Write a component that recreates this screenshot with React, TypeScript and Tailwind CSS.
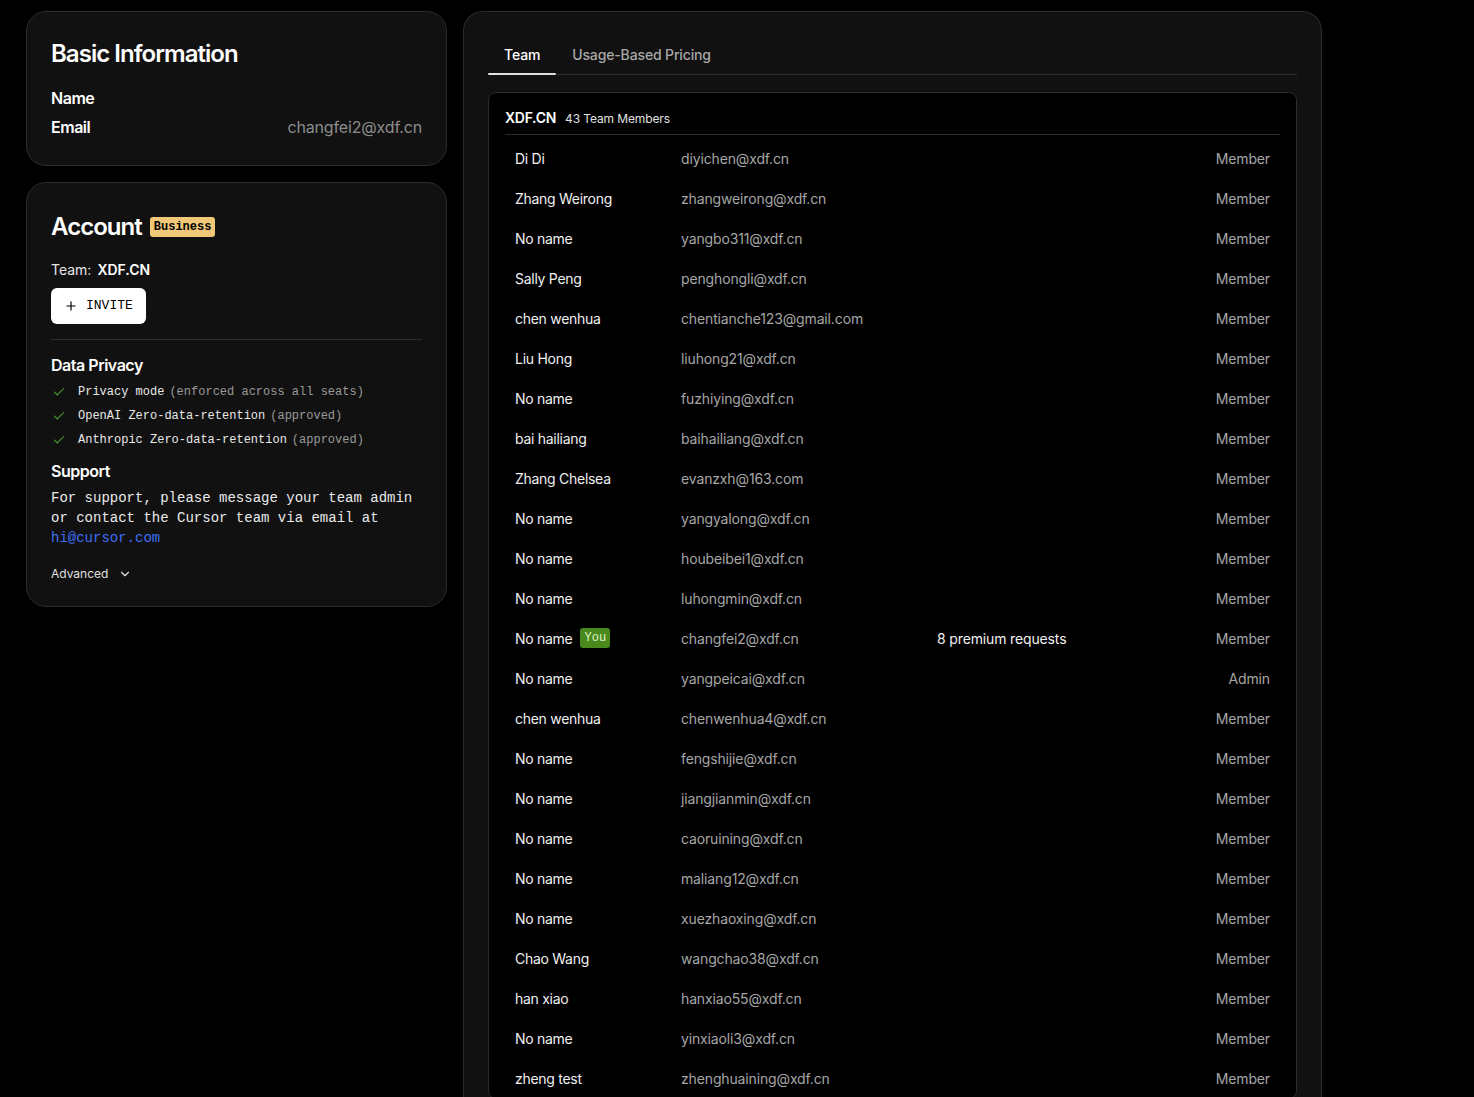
import { Plus, Check, ChevronDown } from "lucide-react";

const members: { name: string; email: string; role: string; you?: boolean; usage?: string }[] = [
  { name: "Di Di", email: "diyichen@xdf.cn", role: "Member" },
  { name: "Zhang Weirong", email: "zhangweirong@xdf.cn", role: "Member" },
  { name: "No name", email: "yangbo311@xdf.cn", role: "Member" },
  { name: "Sally Peng", email: "penghongli@xdf.cn", role: "Member" },
  { name: "chen wenhua", email: "chentianche123@gmail.com", role: "Member" },
  { name: "Liu Hong", email: "liuhong21@xdf.cn", role: "Member" },
  { name: "No name", email: "fuzhiying@xdf.cn", role: "Member" },
  { name: "bai hailiang", email: "baihailiang@xdf.cn", role: "Member" },
  { name: "Zhang Chelsea", email: "evanzxh@163.com", role: "Member" },
  { name: "No name", email: "yangyalong@xdf.cn", role: "Member" },
  { name: "No name", email: "houbeibei1@xdf.cn", role: "Member" },
  { name: "No name", email: "luhongmin@xdf.cn", role: "Member" },
  { name: "No name", email: "changfei2@xdf.cn", role: "Member", you: true, usage: "8 premium requests" },
  { name: "No name", email: "yangpeicai@xdf.cn", role: "Admin" },
  { name: "chen wenhua", email: "chenwenhua4@xdf.cn", role: "Member" },
  { name: "No name", email: "fengshijie@xdf.cn", role: "Member" },
  { name: "No name", email: "jiangjianmin@xdf.cn", role: "Member" },
  { name: "No name", email: "caoruining@xdf.cn", role: "Member" },
  { name: "No name", email: "maliang12@xdf.cn", role: "Member" },
  { name: "No name", email: "xuezhaoxing@xdf.cn", role: "Member" },
  { name: "Chao Wang", email: "wangchao38@xdf.cn", role: "Member" },
  { name: "han xiao", email: "hanxiao55@xdf.cn", role: "Member" },
  { name: "No name", email: "yinxiaoli3@xdf.cn", role: "Member" },
  { name: "zheng test", email: "zhenghuaining@xdf.cn", role: "Member" },
];

const sans = "font-['Inter','Noto_Sans',sans-serif]";
const mono = "font-['Liberation_Mono','DejaVu_Sans_Mono',monospace]";

const privacy = [
  { label: "Privacy mode", note: "(enforced across all seats)" },
  { label: "OpenAI Zero-data-retention", note: "(approved)" },
  { label: "Anthropic Zero-data-retention", note: "(approved)" },
];

export default function App() {
  return (
    <div className={`min-h-screen bg-black text-white ${sans} flex items-start gap-4 pl-[26px] pt-[11px]`}>
      {/* left column */}
      <div className="w-[421px] flex flex-col gap-4">
        <section className="rounded-[20px] border border-[#2c2c2c] bg-[#111111] px-6 pt-[27px] pb-[27px]">
          <h1 className="text-[24px] font-semibold tracking-[-0.04em] leading-[30px]">Basic Information</h1>
          <div className="mt-[18px] flex flex-col gap-[7px]">
            <div className="flex justify-between leading-[22px]">
              <span className="text-[16px] font-semibold tracking-[-0.03em]">Name</span>
            </div>
            <div className="flex justify-between leading-[22px]">
              <span className="text-[16px] font-semibold tracking-[-0.03em]">Email</span>
              <span className="text-[16px] tracking-[-0.01em] text-[#8c8c8c]">changfei2@xdf.cn</span>
            </div>
          </div>
        </section>

        <section className="rounded-[20px] border border-[#2c2c2c] bg-[#111111] px-6 pt-[29px] pb-[23px]">
          <div className="flex items-center gap-2">
            <h2 className="text-[24px] font-semibold tracking-[-0.04em] leading-[30px]">Account</h2>
            <span className={`${mono} rounded-[3px] bg-[#f0c878] px-[4px] text-[12px] leading-[20px] font-bold text-black`}>Business</span>
          </div>
          <div className="mt-[18px] text-[14px] leading-[20px]">
            <span className="text-[#e5e5e5]">Team:</span>
            <span className="ml-[6px] font-semibold">XDF.CN</span>
          </div>
          <button className={`${mono} mt-[8px] flex h-[36px] items-center gap-[8px] rounded-[6px] bg-white px-[13px] text-[13px] text-black`}>
            <Plus size={14} strokeWidth={2} />
            INVITE
          </button>
          <div className="mt-[15px] h-px bg-[#2e2e2e]" />
          <h3 className="mt-[14px] text-[16px] font-semibold tracking-[-0.03em] leading-[22px]">Data Privacy</h3>
          <ul className="mt-[4px] flex flex-col">
            {privacy.map((p) => (
              <li key={p.label} className={`${mono} flex items-center text-[12px] leading-[24px]`}>
                <Check size={14} className="ml-[1px] mr-[12px] text-[#4caf32]" strokeWidth={1.75} />
                <span className="text-[#e8e8e8]">{p.label}</span>
                <span className="ml-[5px] text-[#9a9a9a]">{p.note}</span>
              </li>
            ))}
          </ul>
          <h3 className="mt-[8px] text-[16px] font-semibold tracking-[-0.03em] leading-[22px]">Support</h3>
          <p className={`${mono} mt-[6px] text-[14px] leading-[20px] text-[#eaeaea]`}>
            For support, please message your team admin or contact the Cursor team via email at{" "}
            <a className="text-[#3f6ef5]">hi@cursor.com</a>
          </p>
          <div className="mt-[17px] flex items-center gap-[10px] text-[12px] leading-[18px] text-[#e0e0e0]">
            Advanced
            <ChevronDown size={14} strokeWidth={2} />
          </div>
        </section>
      </div>

      {/* right panel */}
      <section className="w-[859px] rounded-t-[20px] border border-b-0 border-[#2c2c2c] bg-[#111111] px-6 pt-[33px] pb-6">
        <div className="flex border-b border-[#2e2e2e] text-[14px] leading-[20px]">
          <div className="relative px-4 pb-[9px] font-medium tracking-[-0.01em] text-white">
            Team
            <div className="absolute bottom-[-1px] left-0 right-0 h-[2px] rounded-full bg-[#e0e0e0]" />
          </div>
          <div className="px-4 pb-[9px] font-medium tracking-[-0.01em] text-[#a8a8a8]">Usage-Based Pricing</div>
        </div>

        <div className="mt-[17px] rounded-[8px] border border-[#2c2c2c] bg-black px-4 pt-[16px]">
          <div className="flex items-baseline gap-[9px] border-b border-[#2e2e2e] pb-[6px]">
            <span className="text-[14px] font-semibold tracking-[-0.02em] leading-[18px]">XDF.CN</span>
            <span className="text-[12px] tracking-[-0.01em] text-[#e0e0e0]">43 Team Members</span>
          </div>
          <div className="flex flex-col pt-[3px]">
            {members.map((m, i) => (
              <div key={i} className="grid h-[40px] grid-cols-[166px_256px_1fr_auto] items-center px-[10px] text-[14px]">
                <div className="flex items-center gap-[8px] tracking-[-0.02em] text-[#f0f0f0]">
                  {m.name}
                  {m.you && (
                    <span className={`${mono} rounded-[3px] bg-[#4a8a1d] px-[4px] text-[12px] leading-[20px] tracking-normal text-[#dff5c8]`}>You</span>
                  )}
                </div>
                <div className="tracking-[-0.01em] text-[#a6a6a6]">{m.email}</div>
                <div className="tracking-[-0.01em] text-[#f0f0f0]">{m.usage ?? ""}</div>
                <div className="text-right tracking-[-0.01em] text-[#a6a6a6]">{m.role}</div>
              </div>
            ))}
          </div>
        </div>
      </section>
    </div>
  );
}
